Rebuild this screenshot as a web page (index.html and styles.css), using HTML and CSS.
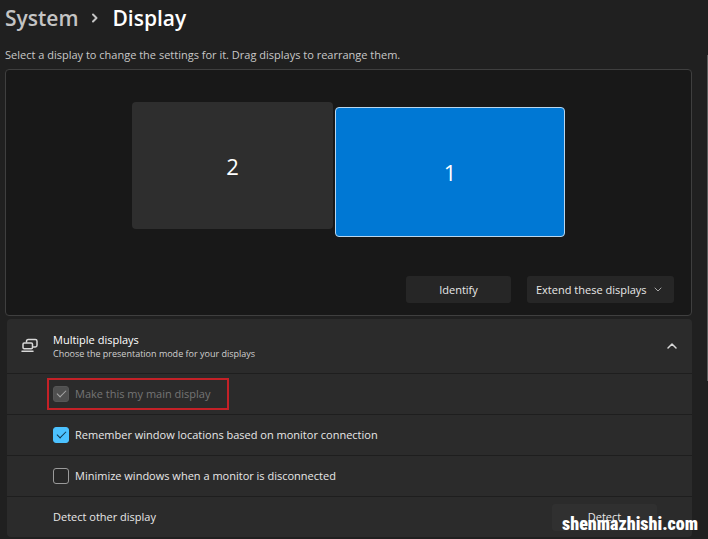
FILE: index.html
```
<!DOCTYPE html>
<html lang="en">
<head>
    <meta charset="UTF-8">
    <meta name="viewport" content="width=device-width, initial-scale=1.0">
    <title>System - Display</title>
    <link rel="stylesheet" href="styles.css">
</head>
<body>
    <main class="page">
        <nav class="breadcrumb">
            <a class="crumb" href="#system">System</a>
            <svg class="crumb-arrow" width="8" height="12" viewBox="0 0 8 12"><path d="M2 2.500l3.500 3.500-3.500 3.500"/></svg>
            <h1 class="crumb-current">Display</h1>
        </nav>
        <p class="hint">Select a display to change the settings for it. Drag displays to rearrange them.</p>

        <section class="arrange">
            <div class="monitors">
                <button class="monitor" type="button">2</button>
                <button class="monitor primary" type="button">1</button>
            </div>
            <div class="actions">
                <button class="btn" type="button">Identify</button>
                <div class="select-wrap">
                    <select class="select" aria-label="Display mode">
                        <option>Extend these displays</option>
                    </select>
                    <svg class="select-arrow" width="8" height="6" viewBox="0 0 8 6"><path d="M1 1l3 3 3-3"/></svg>
                </div>
            </div>
        </section>

        <section class="card">
            <header class="card-head">
                <svg class="card-icon" width="18" height="16" viewBox="0 0 18 16">
                    <path d="M5.500 4V3.200q0-1.700 1.700-1.700h7.100q1.700 0 1.700 1.700v4.100q0 1.700-1.700 1.700h-1.800"/>
                    <rect x="2" y="5" width="9.500" height="5.800" rx="1.200"/>
                    <path d="M1 13.200h11"/>
                </svg>
                <div class="card-title">
                    <h2>Multiple displays</h2>
                    <p>Choose the presentation mode for your displays</p>
                </div>
                <button class="toggle" type="button" aria-label="Collapse" aria-expanded="true">
                    <svg width="12" height="8" viewBox="0 0 12 8"><path d="M2 6l4-4 4 4"/></svg>
                </button>
            </header>
            <div class="row">
                <label class="check marked disabled"><input type="checkbox" checked disabled>Make this my main display</label>
            </div>
            <div class="row">
                <label class="check"><input type="checkbox" checked>Remember window locations based on monitor connection</label>
            </div>
            <div class="row">
                <label class="check"><input type="checkbox">Minimize windows when a monitor is disconnected</label>
            </div>
            <div class="row row-detect">
                <span>Detect other display</span>
                <button class="btn btn-detect" type="button">Detect</button>
            </div>
        </section>
    </main>
    <div class="scrollbar"></div>
    <div class="watermark">shenmazhishi.com</div>
</body>
</html>
```

FILE: styles.css
```
* {
    margin: 0;
    padding: 0;
    box-sizing: border-box;
}
body {
    position: relative;
    min-height: 100vh;
    overflow: hidden;
    background: #202020;
    color: #e8e8e8;
    font-family: "Open Sans", "Noto Sans", sans-serif;
    font-size: 11px;
    line-height: 16px;
}
button, select {
    font: inherit;
    color: inherit;
    border: 0;
}
svg {
    fill: none;
    stroke: #d8d8d8;
    stroke-linecap: round;
    stroke-linejoin: round;
}
.page {
    padding: 4px 16px 0 5px;
}

/* breadcrumb */
.breadcrumb {
    display: flex;
    align-items: center;
    gap: 13px;
    height: 28px;
    font-size: 21px;
    line-height: 28px;
    font-weight: 600;
}
.crumb {
    color: #c4c4c4;
    text-decoration: none;
}
.crumb-arrow {
    stroke-width: 2;
    stroke: #c4c4c4;
}
.crumb-current {
    font-size: 21px;
    font-weight: 600;
    color: #fff;
}
.hint {
    margin: 15px 0 6px;
    color: #c8c8c8;
}

/* monitor arrangement */
.arrange {
    padding: 32px 17px 12px;
    border: 1px solid #3f3f3f;
    border-radius: 4px;
    background: #181818;
}
.monitors {
    display: flex;
    justify-content: center;
    align-items: flex-start;
    gap: 2px;
}
.monitor {
    width: 201px;
    height: 127px;
    border-radius: 4px;
    background: #2e2e2e;
    color: #fff;
    font-size: 22px;
}
.monitor.primary {
    width: 230px;
    height: 130px;
    margin-top: 5px;
    border: 1px solid #b9d6ee;
    background: #0078d4;
}
.actions {
    display: flex;
    justify-content: flex-end;
    gap: 16px;
    margin-top: 39px;
}
.btn {
    width: 105px;
    height: 27px;
    border-radius: 3px;
    background: #262626;
}
.select-wrap {
    position: relative;
}
.select {
    width: 147px;
    height: 27px;
    padding-left: 9px;
    border-radius: 3px;
    background: #262626;
    appearance: none;
}
.select-arrow {
    position: absolute;
    top: 11px;
    right: 12px;
    stroke: #a8a8a8;
    pointer-events: none;
}

/* settings card */
.card {
    margin: 3px 0 0 2px;
    border-radius: 4px;
    background: #2b2b2b;
}
.card-head {
    display: flex;
    align-items: center;
    height: 54px;
    padding: 0 14px;
}
.card-icon {
    stroke-width: 1.5;
}
.card-title {
    flex: 1;
    margin-left: 14px;
    padding-top: 2px;
    line-height: 14px;
}
.card-title h2 {
    font-size: 11px;
    font-weight: 400;
    color: #fff;
}
.card-title p {
    font-size: 9px;
    color: #d0d0d0;
}
.toggle {
    display: flex;
    background: none;
}
.toggle svg {
    stroke-width: 1.5;
}
.row {
    display: flex;
    align-items: center;
    height: 41px;
    padding: 0 35px 0 46px;
    border-top: 1px solid #1e1e1e;
}
.row-detect {
    justify-content: space-between;
}
.check {
    display: flex;
    align-items: center;
    gap: 6px;
}
.check input {
    display: grid;
    place-items: center;
    width: 16px;
    height: 16px;
    border: 1px solid #9a9a9a;
    border-radius: 3px;
    background: #272727;
    appearance: none;
}
.check input:checked {
    border-color: #4cc2ff;
    background: #4cc2ff;
}
/* tick */
.check input:checked::after {
    content: "";
    width: 8px;
    height: 4px;
    margin-bottom: 3px;
    border-left: 1px solid #10344a;
    border-bottom: 1px solid #10344a;
    transform: rotate(-45deg);
}
.check.disabled {
    color: #757575;
}
.check.disabled input {
    border-color: #565656;
    background: #505050;
}
.check.disabled input:checked::after {
    border-color: #a8a8a8;
}
.check.marked {
    height: 32px;
    margin-left: -6px;
    padding: 0 17px 0 4px;
    border: 2px solid #c42127;
}
.btn-detect {
    background: #303030;
}

.scrollbar {
    position: absolute;
    top: 55px;
    right: 0;
    width: 1px;
    height: 326px;
    background: #5c5c5c;
}
.watermark {
    position: absolute;
    right: 10px;
    bottom: 3px;
    color: #fff;
    font-family: Impact, "Roboto Condensed", "Liberation Sans Narrow", "Liberation Sans", sans-serif;
    font-size: 18px;
    font-weight: 900;
    line-height: 24px;
}
```
